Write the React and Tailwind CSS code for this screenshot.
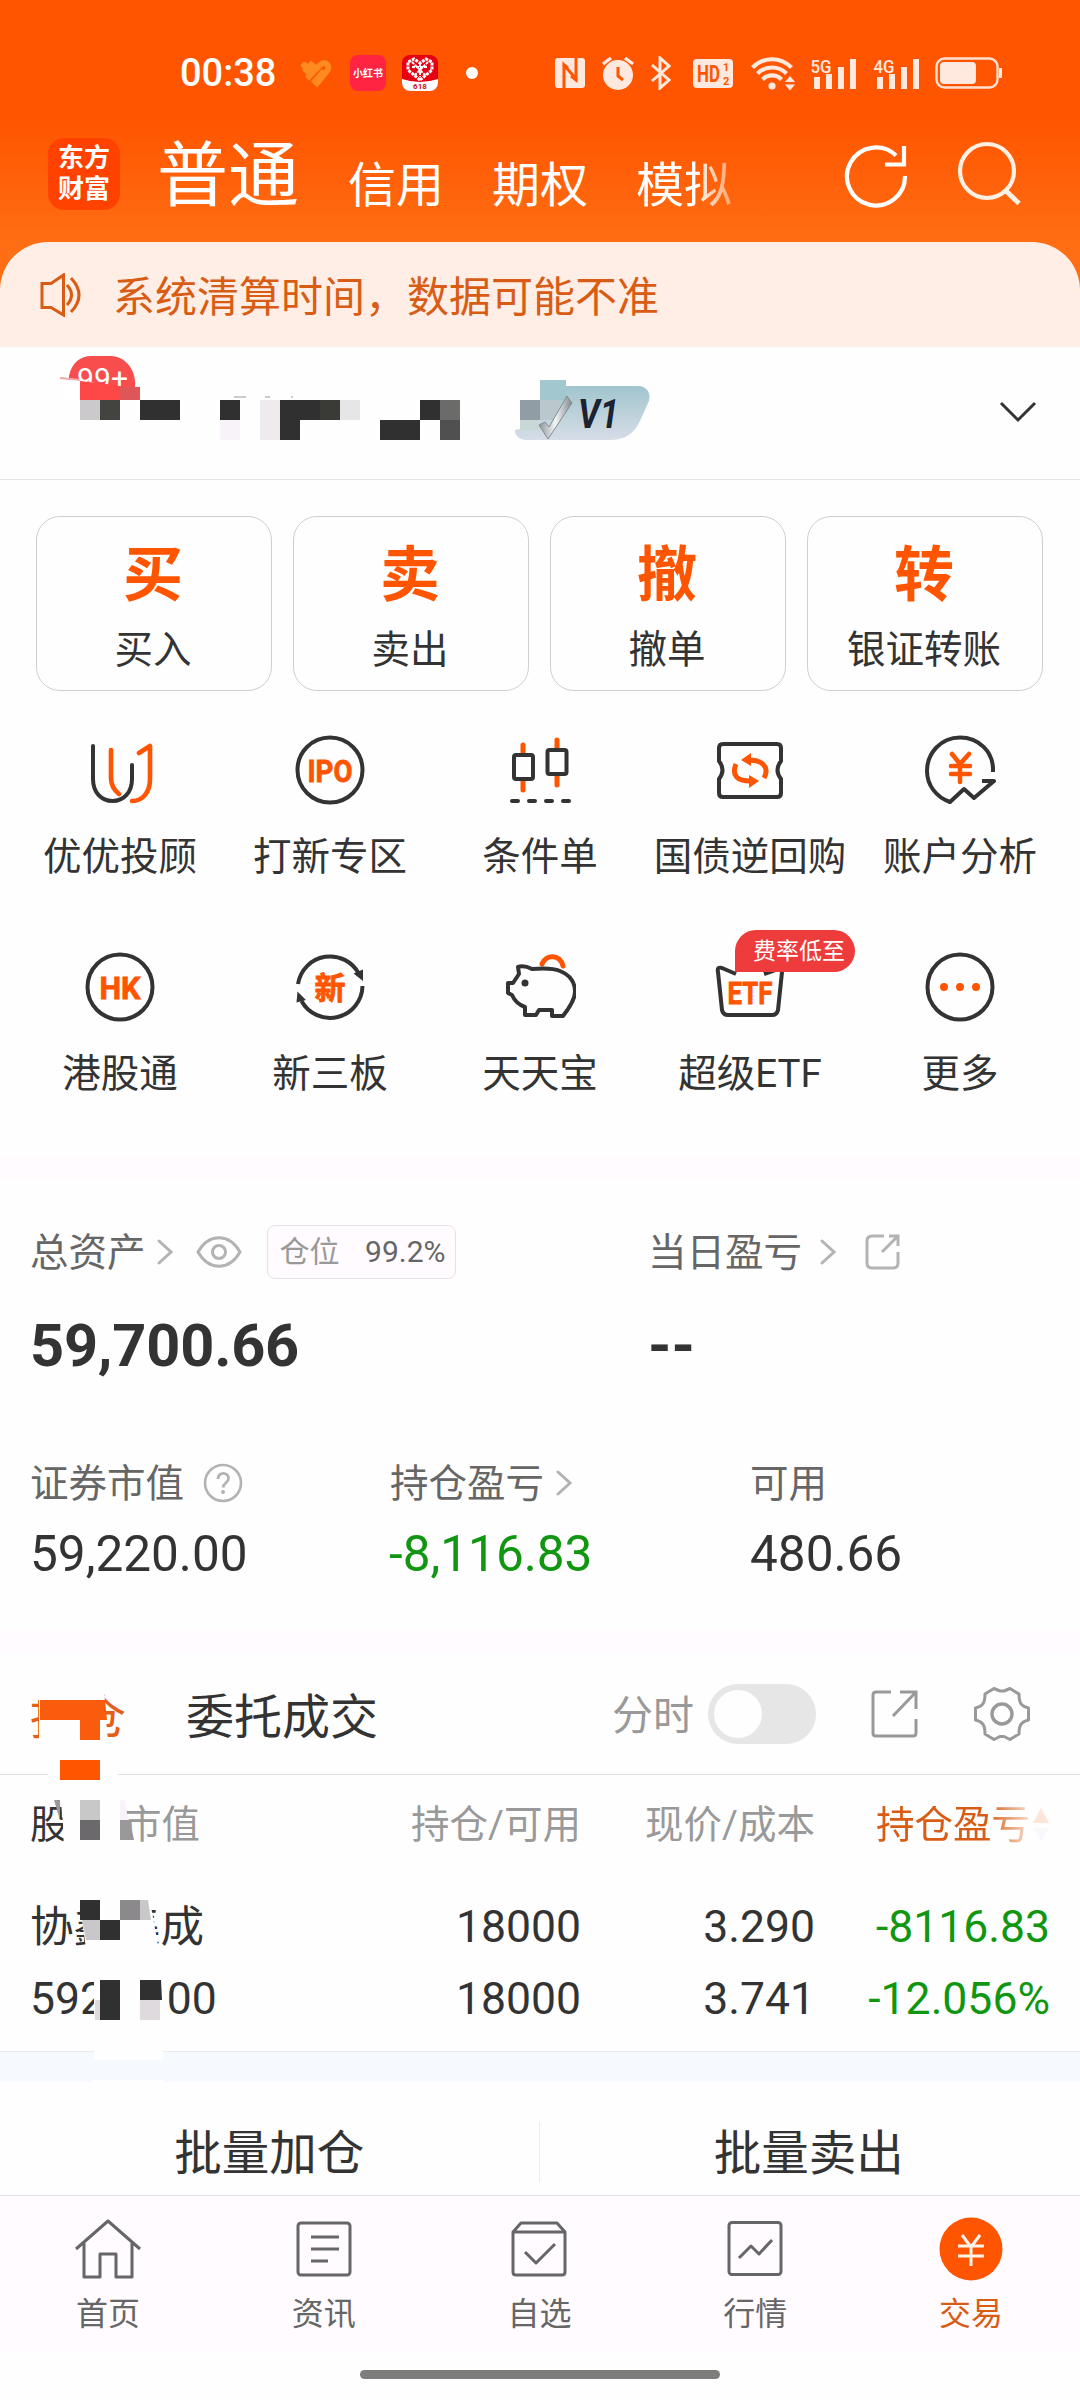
const INK = '#333333';
const ORANGE = '#ff5500';

function Svg({ w, h, className = '', children }) {
  return (
    <svg width={w} height={h} viewBox={`0 0 ${w} ${h}`} fill="none" className={`shrink-0 ${className}`}>
      {children}
    </svg>
  );
}

function Signal({ label }) {
  return (
    <Svg w={47} h={38}>
      <text x="0.500" y="19" fontSize="19" fontWeight="500" fill="#ffe9de" textLength="21" lengthAdjust="spacingAndGlyphs">{label}</text>
      <path d="M4 23h6v12h-6zM16 20h6v15h-6zM28 13h6v22h-6zM40 5h6v30h-6z" fill="#ffe9de" />
    </Svg>
  );
}

function StatusBar() {
  return (
    <div className="flex h-[112px] items-center pt-[34px] pl-[180px] text-white">
      <span className="w-[120px] text-[38px] leading-none font-medium">00:38</span>
      <Svg w={33} h={30}>
        <g stroke="#ff8a1f" strokeWidth="7">
          <path d="M4.500 7.500L9 12" strokeLinecap="round" />
          <path d="M5 15L14 5" strokeWidth="8" />
          <path d="M7 20.500L20 7c5-5 11 1 7 6L15 27.500" strokeWidth="6" />
          <path d="M12 24.500L23 12" strokeWidth="3" />
        </g>
      </Svg>
      <div className="ml-[17px] flex size-9 items-center justify-center rounded-lg bg-[#ff2442] text-[10px] font-bold">小红书</div>
      <Svg w={36} h={36} className="ml-4">
        <rect width="36" height="36" rx="8" fill="#e60012" />
        <path d="M0 24q18 6 36 0v4a8 8 0 0 1-8 8H8a8 8 0 0 1-8-8z" fill="#fff" />
        <path d="M18 25L6 15V7l6-3 6 4 6-4 6 3v8z" stroke="#fff" strokeWidth="3" strokeDasharray="3 1" />
        <path d="M10 7l14 14M26 7L12 21M10 12h16M18 9v13" stroke="#fff" strokeWidth="2" strokeDasharray="3 1" />
        <text x="18" y="34" fontSize="8" fontWeight="700" fill="#d0101a" textAnchor="middle">618</text>
      </Svg>
      <div className="ml-7 size-3 rounded-full bg-white" />
      <Svg w={30} h={32} className="ml-[77px]">
        <rect y="1" width="30" height="30" rx="3" fill="#ffe9de" />
        <path d="M9 31V8l13 15M8 7l5 4M21 1v22l-5-4" stroke="#ff5500" strokeWidth="3" />
      </Svg>
      <Svg w={34} h={36} className="ml-4">
        <circle cx="17" cy="20" r="15" fill="#ffe9de" />
        <path d="M2 9l8-6M32 9l-8-6" stroke="#ffe9de" strokeWidth="3.400" />
        <path d="M17 12v9l5 4" stroke="#ff5500" strokeWidth="3" />
      </Svg>
      <Svg w={22} h={34} className="ml-[15px]">
        <path d="M2 9l17 15-9 8V2l9 8L2 25" stroke="#ffe9de" strokeWidth="3" />
      </Svg>
      <Svg w={40} h={29} className="ml-[21px]">
        <rect width="40" height="29" rx="4" fill="#ffe9de" />
        <text x="4" y="23" fontSize="23" fontWeight="700" fill="#ff5500" textLength="23" lengthAdjust="spacingAndGlyphs">HD</text>
        <text x="30" y="12" fontSize="11" fontWeight="700" fill="#ff5500">1</text>
        <text x="30" y="26" fontSize="11" fontWeight="700" fill="#ff5500">2</text>
      </Svg>
      <Svg w={46} h={36} className="ml-[18px]">
        <path d="M1.500 12.500c11-11 28-11 39 0M6.500 18.500c8-8 21-8 29 0M11.500 24.500c5-5.500 14-5.500 19 0" stroke="#ffe9de" strokeWidth="4.200" />
        <circle cx="21" cy="31" r="3.600" fill="#ffe9de" />
        <path d="M34 27l5-6 5 6zM34 29.500l5 6 5-6z" fill="#ffe9de" />
      </Svg>
      <div className="ml-[13px]"><Signal label="5G" /></div>
      <div className="ml-4"><Signal label="4G" /></div>
      <Svg w={68} h={32} className="ml-[15px]">
        <rect x="1.500" y="1.500" width="61" height="29" rx="8" stroke="#ffe0d0" strokeWidth="2.400" />
        <rect x="5" y="5" width="36" height="22" rx="4" fill="#ffe9de" />
        <path d="M65.500 11v10" stroke="#ffe9de" strokeWidth="3" />
      </Svg>
    </div>
  );
}

function Header() {
  return (
    <div className="flex h-[130px] items-start text-white">
      <div className="mt-[26px] ml-12 flex h-[72px] w-[72px] flex-col items-center justify-center rounded-2xl bg-[#ff4200] text-[26px] leading-[31px] font-bold">
        <span>东方</span>
        <span>财富</span>
      </div>
      <div className="mt-6 ml-[37px] flex items-start gap-12 text-[48px] leading-[80px]">
        <span className="text-[71px]">普通</span>
        <span className="mt-[10px] ml-px">信用</span>
        <span className="mt-[10px]">期权</span>
        <span className="mt-[10px] [mask-image:linear-gradient(to_right,#000_60%,#0006)]">模拟</span>
      </div>
      <Svg w={66} h={66} className="mt-[31px] ml-[112px]">
        <path d="M52 12.500A29 29 0 1 0 61 33" stroke="#fff" strokeWidth="4.200" />
        <path d="M60 3v18.500H41" stroke="#fff" strokeWidth="4.200" />
      </Svg>
      <Svg w={66} h={66} className="mt-[29px] ml-[47px]">
        <circle cx="30" cy="30" r="27" stroke="#fff0e4" strokeWidth="4.200" />
        <path d="M48 49l14 13.500" stroke="#fff0e4" strokeWidth="5" />
      </Svg>
    </div>
  );
}

function Notice() {
  return (
    <div className="flex h-[105px] items-center rounded-t-[48px] bg-[#ffeee6] pl-10 text-[42px] text-[#d85c14]">
      <Svg w={42} h={44}>
        <path d="M2 10.500h9L23.500 2v40L11 34.500H2z" stroke="#d85c14" strokeWidth="3" />
        <path d="M27 12q9 10 0 20M31 5q16 17 0 34" stroke="#d85c14" strokeWidth="3" />
      </Svg>
      <span className="ml-[31px] pt-1.5 leading-none">系统清算时间，数据可能不准</span>
    </div>
  );
}

function Account() {
  return (
    <div className="relative flex h-[133px] items-center justify-end border-b border-[#e4e4e4] pr-[43px] pb-[3px]">
      <svg width="660" height="110" viewBox="0 347 660 110" className="absolute top-0 left-0">
        <defs>
          <linearGradient id="vip" x1="0" y1="0" x2="0" y2="1">
            <stop offset="0" stopColor="#a1c5cd" />
            <stop offset="1" stopColor="#d6dde7" />
          </linearGradient>
          <linearGradient id="tick" x1="0" y1="0" x2="1" y2="0">
            <stop offset="0" stopColor="#8e959b" />
            <stop offset="0.500" stopColor="#f3f5f6" />
            <stop offset="1" stopColor="#80878c" />
          </linearGradient>
        </defs>
        <path d="M69 378v-2c3-14 12-20 22-20h20c14 0 26 14 24 32h-15l-40-8z" fill="#f84d4d" />
        <path d="M60 378l20 2" stroke="#f3a7a7" strokeWidth="2" />
        <text x="77" y="389" fontSize="30" fill="#fff" textLength="51">99+</text>
        <path d="M80 381l26 3 34 5v11H80z" fill="#fe4848" />
        <path d="M66 380l14 1v20H66z" fill="#fff" />
        <path d="M120 387h20v13h-20z" fill="#df5659" />
        <path d="M80 400h20v20H80z" fill="#ccc9cd" />
        <path d="M100 400h20v20h-20z" fill="#43443f" />
        <path d="M140 400h40v20h-40zM220 400h20v20h-20zM280 400h40v20h-20v20h-20zM380 420h40v-20h20v20h-20v20h-40z" fill="#303030" />
        <path d="M220 420h20v20h-20z" fill="#f7f3f8" />
        <path d="M260 400h20v40h-20z" fill="#eeeaee" />
        <path d="M320 400h20v20h-20z" fill="#3a3b37" />
        <path d="M340 400h20v20h-20z" fill="#e6e6e6" />
        <path d="M440 400h20v20h-20z" fill="#6b6c69" />
        <path d="M420 420h20v20h-20z" fill="#fefefe" />
        <path d="M440 420h20v20h-20z" fill="#505050" />
        <path d="M234 397h12M265 397h5M291 397h2" stroke="#9a9a9a" strokeWidth="1.200" />
        <path d="M560 386h78c9 0 13 7 11 15l-9 20c-6 13-16 19-29 19h-84c-8 0-12-4-12-10l10-2z" fill="url(#vip)" />
        <path d="M540 380h26v20h-26z" fill="#a3c7ce" />
        <path d="M520 400h20v20h-20z" fill="#919da5" />
        <path d="M540 400h20v20h-20z" fill="#bac8cd" />
        <path d="M520 420h20v10h-20z" fill="#c9d7d7" />
        <path d="M539 425l6-3 4 5 18-31 5 7-24 36z" fill="url(#tick)" stroke="#858c91" strokeWidth="1" />
        <text x="578" y="428" fontSize="41" fontWeight="700" fontStyle="italic" fill="#1b2230" textLength="41" lengthAdjust="spacingAndGlyphs">V1</text>
      </svg>
      <Svg w={38} h={22}>
        <path d="M2 2l17 17L36 2" stroke={INK} strokeWidth="3" />
      </Svg>
    </div>
  );
}

const TRADES = [
  ['买', '买入'],
  ['卖', '卖出'],
  ['撤', '撤单'],
  ['转', '银证转账'],
];

function TradeCards() {
  return (
    <div className="grid grid-cols-4 gap-[21px] pt-9 pr-[37px] pl-9">
      {TRADES.map(([glyph, label]) => (
        <div key={label} className="flex h-[175px] flex-col items-center rounded-3xl border border-[#cfcfcf] pt-7 pr-0.5">
          <span className="h-[62px] text-[60px] leading-[62px] font-bold text-[#ff5500]">{glyph}</span>
          <span className="mt-[23px] h-10 text-[38.500px] leading-10 text-[#333]">{label}</span>
        </div>
      ))}
    </div>
  );
}

function Ring() {
  return <circle cx="36" cy="36" r="32.500" stroke={INK} strokeWidth="4" />;
}

function IconLabel({ y, size, width, children }) {
  return (
    <text x="36" y={y} fontSize={size} fontWeight="700" fill={ORANGE} stroke={ORANGE} strokeWidth="0.800" textAnchor="middle" textLength={width} lengthAdjust="spacingAndGlyphs">
      {children}
    </text>
  );
}

const TOOLS = [
  {
    label: '优优投顾',
    icon: (
      <g strokeWidth="4" strokeLinecap="round" strokeLinejoin="round">
        <path d="M9 12v33c0 13 8 22 19.500 22S48 58 48 45V31" stroke={INK} />
        <path d="M27 16v28c0 8 3 12 8 16M55 19l11-7v33c0 13-7 22-18 22" stroke={ORANGE} strokeWidth="4.600" />
      </g>
    ),
  },
  { label: '打新专区', icon: <><Ring /><IconLabel y={48} size={32} width={45}>IPO</IconLabel></> },
  {
    label: '条件单',
    icon: (
      <g strokeWidth="4" strokeLinecap="round">
        <path d="M19 11v9M19 46v10M53 6v9M53 41v10" stroke={ORANGE} strokeWidth="5" />
        <rect x="10" y="21" width="19" height="24" rx="2" stroke={INK} />
        <rect x="43.500" y="16" width="19" height="24" rx="2" stroke={INK} />
        <path d="M8 67h6M25 67h6M42 67h6M59 67h6" stroke={INK} />
      </g>
    ),
  },
  {
    label: '国债逆回购',
    icon: (
      <g strokeWidth="4">
        <path d="M9 10h54q4 0 4 4v13q-7 9 0 18v14q0 4-4 4H9q-4 0-4-4V45q7-9 0-18V14q0-4 4-4z" stroke={INK} />
        <path d="M22 30c-5 12 2 17 14 17M50 44c6-11-2-18-15-18" stroke={ORANGE} strokeWidth="5" />
        <path d="M35 41l10 6-10 7zM37 19l-10 7 10 6z" fill={ORANGE} />
      </g>
    ),
  },
  {
    label: '账户分析',
    icon: (
      <g strokeWidth="4" strokeLinejoin="round">
        <path d="M69 38C70 17 54 3.500 36 3.500C17 3.500 3 19 3 37C3 51 12 63 26 68L40 55l10 9L70 47H58" stroke={INK} />
        <path d="M28 20l8 10 9-10M36 30v18M27 32h19M27 40h19" stroke={ORANGE} strokeWidth="4.500" strokeLinecap="round" />
      </g>
    ),
  },
  { label: '港股通', icon: <><Ring /><IconLabel y={48} size={32} width={41}>HK</IconLabel></> },
  {
    label: '新三板',
    icon: (
      <>
        <path d="M4 33a32.500 32.500 0 0 1 61-10M68.500 35a32.500 32.500 0 0 1-61 15" stroke={INK} strokeWidth="4" />
        <path d="M59.500 22.500l9.500-4v11.500zM3.500 40.500l8.500 8.500-9.500 2.500z" fill={INK} />
        <IconLabel y={48} size={31} width={31}>新</IconLabel>
      </>
    ),
  },
  {
    label: '天天宝',
    icon: (
      <g strokeWidth="4" strokeLinejoin="round">
        <path d="M38 13c4-10 18-10 21 2" stroke={ORANGE} strokeWidth="5" strokeLinecap="round" />
        <path d="M14 16q6-2 14 2c12-1 21-1 28 2 10 4 15 11 15 21 0 7-5 15-12 24H48v-6H35l-3 5H21V56q-9-3-13-12l-4-2V32h5l6-9z" stroke={INK} />
        <circle cx="21" cy="32" r="3.500" fill={INK} />
      </g>
    ),
  },
  {
    label: '超级ETF',
    badge: '费率低至',
    icon: (
      <>
        <path d="M22 23L8 17c-3-1-5 0-4 4l4 38q1 5 6 5h44q5 0 6-5l4-38q0-5-4-3L50 23" stroke={INK} strokeWidth="4" strokeLinejoin="round" />
        <IconLabel y={53} size={32} width={45}>ETF</IconLabel>
      </>
    ),
  },
  {
    label: '更多',
    icon: (
      <>
        <Ring />
        <path d="M20 36h.010M36 36h.010M52 36h.010" stroke={ORANGE} strokeWidth="8" strokeLinecap="round" />
      </>
    ),
  },
];

function ToolGrid() {
  return (
    <div className="grid grid-cols-5 gap-y-[75px] px-[15px] pt-[43px] pb-[63px]">
      {TOOLS.map(({ label, icon, badge }) => (
        <div key={label} className="relative flex flex-col items-center">
          <Svg w={72} h={72}>{icon}</Svg>
          {badge && (
            <span className="absolute top-[-21px] left-[90px] h-[42px] w-[120px] rounded-[21px] rounded-bl-none bg-[#ee3b3b] pl-2 text-center text-[23px] leading-[44px] text-white">
              {badge}
            </span>
          )}
          <span className="mt-[31px] -mb-px h-10 text-[38.500px] leading-10 whitespace-nowrap text-[#333]">{label}</span>
        </div>
      ))}
    </div>
  );
}

function Chevron({ className }) {
  return (
    <Svg w={16} h={26} className={className}>
      <path d="M2 2l12 11L2 24" stroke="#b3b3b3" strokeWidth="3" strokeLinecap="round" />
    </Svg>
  );
}

function Assets() {
  return (
    <div className="h-[450px] px-[30px] pt-[45px] text-[38.500px] leading-none text-[#666]">
      <div className="flex h-[54px] items-center">
        <div className="flex w-[618px] items-center">
          <span className="pt-[3px]">总资产</span>
          <Chevron className="ml-[11px]" />
          <Svg w={46} h={32} className="ml-[23px]">
            <path d="M2 16C13-3 33-3 44 16C33 35 13 35 2 16z" stroke="#b3b3b3" strokeWidth="3" />
            <circle cx="23" cy="16" r="6.500" stroke="#b3b3b3" strokeWidth="3" />
          </Svg>
          <div className="ml-[25px] flex h-[54px] w-[189px] items-center justify-between rounded-lg border border-[#e6e3e6] bg-[#fffbff] pr-[9px] pl-3 text-[30px]">
            <span className="text-[#999]">仓位</span>
            <span>99.2%</span>
          </div>
        </div>
        <span className="pt-[3px]">当日盈亏</span>
        <Chevron className="ml-[18px]" />
        <Svg w={36} h={36} className="ml-[29px]">
          <path d="M19 2H7Q2 2 2 7v22q0 5 5 5h21q5 0 5-5V18M24 2h9v10M33 2L17 18" stroke="#b3b3b3" strokeWidth="3" />
        </Svg>
      </div>
      <div className="mt-[38px] flex h-[60px] items-center text-[59.500px] font-bold text-[#333]">
        <span className="w-[618px] tracking-[-0.2px]">59,700.66</span>
        <span>--</span>
      </div>
      <div className="mt-[86px] grid grid-cols-[360px_360px_1fr]">
        <div className="flex h-10 items-center">
          <span className="pt-0.5">证券市值</span>
          <Svg w={40} h={40} className="ml-[19px]">
            <circle cx="20" cy="20" r="18" stroke="#b3b3b3" strokeWidth="2.600" />
            <path d="M15 16c0-8 11-7 10.500-.5c0 4-5 4.500-5.500 9" stroke="#b3b3b3" strokeWidth="2.800" />
            <circle cx="20" cy="29" r="2" fill="#b3b3b3" />
          </Svg>
        </div>
        <div className="flex h-10 items-center">
          <span className="pt-0.5">持仓盈亏</span>
          <Chevron className="ml-3" />
        </div>
        <div className="flex h-10 items-center pt-0.5">可用</div>
      </div>
      <div className="mt-[27px] grid h-[50px] grid-cols-[359px_361px_1fr] items-center text-[49.500px] text-[#333]">
        <span>59,220.00</span>
        <span className="text-[#119611]">-8,116.83</span>
        <span>480.66</span>
      </div>
    </div>
  );
}

function PositionTabs() {
  return (
    <div className="flex h-[121px] items-center border-b border-[#e0e0e0] pl-[30px] text-[48px] leading-none">
      <span className="w-[156px] pt-2 text-[#e55f16]">持仓</span>
      <span className="w-[426px] pt-2 text-[#333]">委托成交</span>
      <span className="pt-[5px] text-[41px] text-[#999]">分时</span>
      <div className="ml-[14px] flex h-[60px] w-[108px] items-center rounded-full bg-[#e6e6e6] px-1.5">
        <div className="size-12 rounded-full bg-[#fefefe]" />
      </div>
      <Svg w={48} h={48} className="ml-[55px]">
        <path d="M20 2H5Q2 2 2 5v38q0 3 3 3h37q3 0 3-3V29M29 2h16v17M45 2L22 26" stroke="#999" strokeWidth="3" />
      </Svg>
      <Svg w={56} h={56} className="ml-[55px]">
        <path d="M20 2.500l6 2.500h4l6-2.500 9 5.500c0 9 2 12 9.500 14v12c-7.500 2-9.500 5-9.500 14l-9 5.500-6-3h-4l-6 3-9-5.500c0-9-2-12-9.500-14V22C9 20 11 17 11 8z" stroke="#999" strokeWidth="3" strokeLinejoin="round" />
        <circle cx="28" cy="28" r="10" stroke="#999" strokeWidth="3.400" />
      </Svg>
    </div>
  );
}

const COLUMNS = 'grid grid-cols-[260px_291px_234px_235px] items-center pl-[30px]';

function Positions() {
  return (
    <div className="relative">
      <PositionTabs />
      <div className={`${COLUMNS} h-[98px] pt-[3px] text-[38.500px] leading-none text-[#999]`}>
        <span><span className="text-[#333]">股票</span>/市值</span>
        <span className="text-right">持仓/可用</span>
        <span className="text-right">现价/成本</span>
        <span className="flex items-center justify-end text-[#d85c14]">
          <span className="[mask-image:linear-gradient(to_right,#000_72%,#0003)]">持仓盈亏</span>
          <Svg w={18} h={36} className="ml-0.5">
            <path d="M1 15L9 0l8 15z" fill="#fee5da" />
            <path d="M1 20h16L9 34z" fill="#fbf8fd" />
          </Svg>
        </span>
      </div>
      <div className={`${COLUMNS} mt-[26px] gap-y-4 pb-6 text-[44.500px] leading-[56px] text-[#333]`}>
        <span className="pt-0.5 text-[43.500px] leading-[54px]">协鑫集成</span>
        <span className="text-right">18000</span>
        <span className="text-right">3.290</span>
        <span className="text-right text-[#119611]">-8116.83</span>
        <span>59220.00</span>
        <span className="text-right">18000</span>
        <span className="text-right">3.741</span>
        <span className="text-right text-[#119611]">-12.056%</span>
      </div>
      <div className="h-[31px] border-t border-[#e9ecef] bg-[#f6faff]" />
      {/* privacy mosaic over the tab and the stock name */}
      <svg width="240" height="430" viewBox="0 1654 240 430" className="absolute top-0 left-0">
        <path d="M32 1684h72l2 36 3 30h9v30H48v-30h-9v-50h-7zM60 1790h62l9 62H64l-1-28zM78 1890h70l12 66H87zM94 1965h72v76h-3v19H94zM92 2080h71v4H92z" fill="#fefefe" />
        <path d="M40 1700h65l2 20h-7v20H80v-20H40z" fill="#f95c0c" />
        <path d="M60 1760h40v20H60z" fill="#ff5500" />
        <path d="M54 1800h6v20zM120 1820h10l4 20h-14z" fill="#9b989b" />
        <path d="M80 1800h20v20H80zM140 1900h8l3 20h-11z" fill="#c8c8c8" />
        <path d="M80 1820h20v20H80z" fill="#6b696b" />
        <path d="M120 1800h5l3 20h-8z" fill="#f7f3f8" />
        <path d="M80 1900h20v20h20v20h-20v-20H80zM100 1980h20v40h-20zM140 1980h21l1 20h-22z" fill="#303030" />
        <path d="M120 1900h20v20h-20z" fill="#8c898c" />
        <path d="M82 1920h18v20H86z" fill="#c9c7ca" />
        <path d="M140 2000h20v20h-20zM95 2000h5v20h-5z" fill="#dedade" />
      </svg>
    </div>
  );
}

function BatchActions() {
  return (
    <div className="flex h-[114px] border-b border-[#dfe3e4] pt-11 pr-0.5 text-center text-[47.500px] leading-[56px] text-[#333]">
      <span className="flex-1">批量加仓</span>
      <div className="-mt-1 h-[60px] w-px bg-[#efecef]" />
      <span className="flex-1">批量卖出</span>
    </div>
  );
}

const NAV = [
  { label: '首页', icon: <path d="M4 36L36 8l32 28M12 30v34h16V41h16v23h16V30" /> },
  { label: '资讯', icon: <><rect x="10" y="10" width="52" height="52" rx="3" /><path d="M23 24h28M23 36h28M23 48h17" /></> },
  { label: '自选', icon: <><path d="M10 19l8-9h36l8 9v40q0 3-3 3H13q-3 0-3-3zM10 19h52M22 39l11 11 19-19" /></> },
  { label: '行情', icon: <><rect x="10" y="9.500" width="52" height="52" rx="3" /><path d="M20 45l12-12 8 8 13-14" /></> },
  {
    label: '交易',
    active: true,
    icon: (
      <>
        <circle cx="36" cy="36" r="31.500" fill={ORANGE} stroke="none" />
        <path d="M27 22l9 12 9-12M36 34v19M23 33h26M23 43h26" stroke="#fff3ea" />
      </>
    ),
  },
];

function BottomNav() {
  return (
    <nav className="grid h-[156px] grid-cols-5 bg-[#fffbff] pt-[17px] pr-px">
      {NAV.map(({ label, icon, active }) => (
        <div key={label} className={`flex flex-col items-center ${active ? 'text-[#d85c14]' : 'text-[#666]'}`}>
          <Svg w={72} h={72}>
            <g stroke="#666" strokeWidth="3" strokeLinejoin="round">{icon}</g>
          </Svg>
          <span className="mt-[9px] h-10 text-[32px] leading-10">{label}</span>
        </div>
      ))}
    </nav>
  );
}

export default function App() {
  return (
    <div className="h-[2400px] w-[1080px] overflow-hidden bg-[#fefefe] [font-family:Roboto,'Noto_Sans_CJK_SC',sans-serif]">
      <div className="bg-[linear-gradient(to_bottom,#ff5500_120px,#ff6e14_245px)]">
        <StatusBar />
        <Header />
        <Notice />
      </div>
      <Account />
      <TradeCards />
      <ToolGrid />
      <div className="h-6 bg-[#fffbff]" />
      <Assets />
      <div className="h-6 bg-[#fffbff]" />
      <Positions />
      <BatchActions />
      <BottomNav />
      <div className="flex h-12 justify-center pt-[18px]">
        <div className="h-[9px] w-[360px] rounded-full bg-[#7d7e7b]" />
      </div>
    </div>
  );
}
